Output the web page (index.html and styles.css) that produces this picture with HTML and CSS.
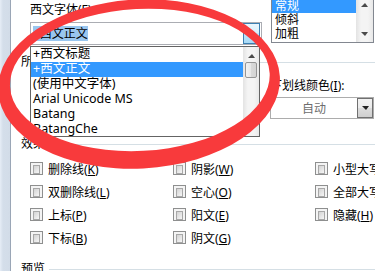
FILE: index.html
```html
<!DOCTYPE html>
<html lang="zh-CN">
<head>
    <meta charset="UTF-8">
    <meta name="viewport" content="width=device-width, initial-scale=1.0">
    <title>字体</title>
    <link rel="stylesheet" href="styles.css">
</head>
<body>
    <div class="window">
        <div class="frame-edge"></div>

        <div class="tab-page">
            <div class="font-row">
                <div class="field">
                    <label class="field-label">西文字体(<u>F</u>):</label>
                    <div class="combo combo-font">
                        <span class="combo-text"><span class="sel">+西文正文</span></span>
                        <span class="drop-btn hot"><i class="arrow-down"></i></span>
                    </div>
                </div>
                <div class="field">
                    <div class="listbox style-list">
                        <ul>
                            <li class="selected">常规</li>
                            <li>倾斜</li>
                            <li>加粗</li>
                        </ul>
                        <div class="scrollbar">
                            <span class="sb-btn"><i class="arrow-up"></i></span>
                            <span class="sb-btn"><i class="arrow-down gray"></i></span>
                        </div>
                    </div>
                </div>
            </div>

            <div class="group-title"><span>所有文字</span></div>

            <div class="color-row">
                <div class="field"></div>
                <div class="field">
                    <label class="field-label">下划线颜色(<u>I</u>):</label>
                    <div class="combo combo-color">
                        <span class="combo-value">自动</span>
                        <span class="drop-btn"><i class="arrow-down"></i></span>
                    </div>
                </div>
            </div>

            <div class="group-title effects-title"><span>效果</span></div>

            <div class="effects">
                <label class="check"><span class="box"></span><span>删除线(<u>K</u>)</span></label>
                <label class="check"><span class="box"></span><span>阴影(<u>W</u>)</span></label>
                <label class="check"><span class="box"></span><span>小型大写字母(<u>M</u>)</span></label>
                <label class="check"><span class="box"></span><span>双删除线(<u>L</u>)</span></label>
                <label class="check"><span class="box"></span><span>空心(<u>O</u>)</span></label>
                <label class="check"><span class="box"></span><span>全部大写字母(<u>A</u>)</span></label>
                <label class="check"><span class="box"></span><span>上标(<u>P</u>)</span></label>
                <label class="check"><span class="box"></span><span>阳文(<u>E</u>)</span></label>
                <label class="check"><span class="box"></span><span>隐藏(<u>H</u>)</span></label>
                <label class="check"><span class="box"></span><span>下标(<u>B</u>)</span></label>
                <label class="check"><span class="box"></span><span>阴文(<u>G</u>)</span></label>
            </div>

            <div class="group-title preview-title"><span>预览</span></div>
        </div>

        <!-- open dropdown of the font combo -->
        <div class="font-dropdown">
            <ul>
                <li>+西文标题</li>
                <li class="selected">+西文正文</li>
                <li>(使用中文字体)</li>
                <li>Arial Unicode MS</li>
                <li>Batang</li>
                <li>BatangChe</li>
            </ul>
            <div class="scrollbar">
                <span class="sb-btn"><i class="arrow-up"></i></span>
                <span class="thumb"></span>
            </div>
        </div>

        <!-- red marker drawn over the screenshot -->
        <svg class="annotation" width="375" height="271" viewBox="0 0 375 271">
            <path fill="#f83a3c" fill-rule="evenodd" transform="rotate(-3 139 83)"
                  d="M-2,84 a141,84.5 0 1,0 282,0 a141,84.5 0 1,0 -282,0 Z
                     M10,80 a130,71 0 1,0 260,0 a130,71 0 1,0 -260,0 Z"/>
        </svg>
    </div>
</body>
</html>
```

FILE: styles.css
```css
* {
    box-sizing: border-box;
}

body {
    margin: 0;
    width: 375px;
    height: 271px;
    overflow: hidden;
    background: #ffffff;
    font-family: "Noto Sans", "Noto Sans CJK SC", sans-serif;
    font-size: 12px;
    color: #000000;
}

ul {
    list-style: none;
    margin: 0;
    padding: 0;
}

.window {
    position: relative;
    display: flex;
    height: 271px;
    overflow: hidden;
}

.frame-edge {
    flex: none;
    width: 11px;
    background: linear-gradient(90deg, #e6edf6 0, #d4deea 3px, #d2dce8 10px);
    border-right: 1px solid #9aa6b6;
}

.tab-page {
    flex: 1;
    min-width: 0;
    padding-left: 10px;
}

.field-label {
    display: block;
    line-height: 16px;
    white-space: nowrap;
}

/* top row: font combo + style list */
.font-row {
    display: grid;
    grid-template-columns: 232px 1fr;
    column-gap: 8px;
    padding-left: 9px;
    margin-top: -6px;
}

.font-row .field-label {
    margin-top: 8px;
    margin-bottom: 4px;
}

.combo {
    display: flex;
    align-items: center;
    background: #ffffff;
}

.combo-font {
    height: 23px;
    border: 1px solid #abadb3;
}

.combo-text {
    flex: 1;
    padding-left: 2px;
    white-space: nowrap;
}

.sel {
    background: #99c6ef;
    line-height: 15px;
    display: inline-block;
}

.drop-btn {
    flex: none;
    display: flex;
    align-items: center;
    justify-content: center;
    width: 17px;
    height: 100%;
}

.drop-btn.hot {
    margin-right: 1px;
    border: 1px solid #3c7fb1;
    background: linear-gradient(#eaf6fd, #d9f0fc 50%, #bee6fd 50%, #a7d9f5);
}

.arrow-down,
.arrow-up {
    display: block;
    width: 0;
    height: 0;
    border-left: 4px solid transparent;
    border-right: 3px solid transparent;
}

.arrow-down {
    border-top: 4px solid #000000;
}

.arrow-up {
    border-bottom: 4px solid #4a4a4a;
}

.arrow-down.gray {
    border-top-color: #4a4a4a;
}

.listbox {
    display: flex;
    border: 1px solid #828790;
    background: #ffffff;
}

.style-list {
    margin-left: 1px;
    width: 103px;
    height: 49px;
}

.style-list ul {
    flex: 1;
    padding-top: 4px;
}

.style-list li {
    height: 14px;
    line-height: 14px;
    padding-left: 3px;
}

li.selected {
    background: #3399ff;
    color: #ffffff;
}

.scrollbar {
    flex: none;
    width: 17px;
    display: flex;
    flex-direction: column;
    justify-content: space-between;
    background: linear-gradient(90deg, #e3e3e3, #f4f4f4 30%, #f4f4f4 70%, #e8e8e8);
}

.sb-btn {
    display: flex;
    align-items: center;
    justify-content: center;
    height: 16px;
}

.style-list .sb-btn:first-child {
    padding-top: 3px;
}

.style-list .sb-btn:last-child {
    padding-bottom: 1px;
}

/* group headers with rule */
.group-title {
    display: flex;
    align-items: center;
    line-height: 16px;
    margin-top: 9px;
}

.group-title::after {
    content: "";
    flex: 1;
    height: 1px;
    margin-left: 4px;
    background: #d5dfe5;
}

.effects-title {
    margin-top: 17px;
}

.preview-title {
    margin-top: 12px;
}

.color-row {
    display: grid;
    grid-template-columns: 232px 1fr;
    column-gap: 8px;
    padding-left: 9px;
}

.color-row .field-label {
    margin-top: 8px;
    margin-bottom: 3px;
}

.combo-color {
    width: 104px;
    height: 22px;
    border: 1px solid #acacac;
}

.combo-value {
    flex: 1;
    text-align: center;
    color: #6d6d6d;
}

.combo-color .drop-btn {
    width: 16px;
    border: 1px solid #707070;
    background: linear-gradient(#f2f2f2, #ebebeb 50%, #dddddd 50%, #cfcfcf);
}

.combo-color .arrow-down {
    border-top-color: #222222;
}

/* effect checkboxes */
.effects {
    display: grid;
    grid-template-columns: 143px 142px 1fr;
    grid-auto-rows: 23px;
    padding-left: 9px;
    margin-top: 5px;
}

.check {
    display: flex;
    align-items: center;
    gap: 5px;
    white-space: nowrap;
}

.box {
    flex: none;
    width: 13px;
    height: 13px;
    border: 1px solid #8e8f8f;
    padding: 2px;
    background: #f4f4f4;
}

.box::after {
    content: "";
    display: block;
    height: 100%;
    border: 1px solid #a8a8a8;
    background: linear-gradient(135deg, #d3d3d3, #f6f6f6);
}

/* open dropdown list */
.font-dropdown {
    position: absolute;
    left: 30px;
    top: 46px;
    width: 230px;
    height: 91px;
    display: flex;
    border: 1px solid #646464;
    background: #ffffff;
}

.font-dropdown ul {
    flex: 1;
}

.font-dropdown li {
    height: 15px;
    line-height: 14px;
    padding-left: 2px;
    font-size: 12.5px;
    white-space: nowrap;
}

.font-dropdown .scrollbar {
    width: 16px;
    justify-content: flex-start;
}

.font-dropdown .sb-btn {
    height: 15px;
    padding-top: 2px;
}

.thumb {
    display: block;
    height: 16px;
    margin: 0 2px;
    border: 1px solid #959595;
    border-radius: 2px;
    background: linear-gradient(90deg, #f3f3f3, #e7e7e7 50%, #d9d9d9 50%, #d4d4d4);
}

.annotation {
    position: absolute;
    left: 0;
    top: 0;
    pointer-events: none;
}
```
